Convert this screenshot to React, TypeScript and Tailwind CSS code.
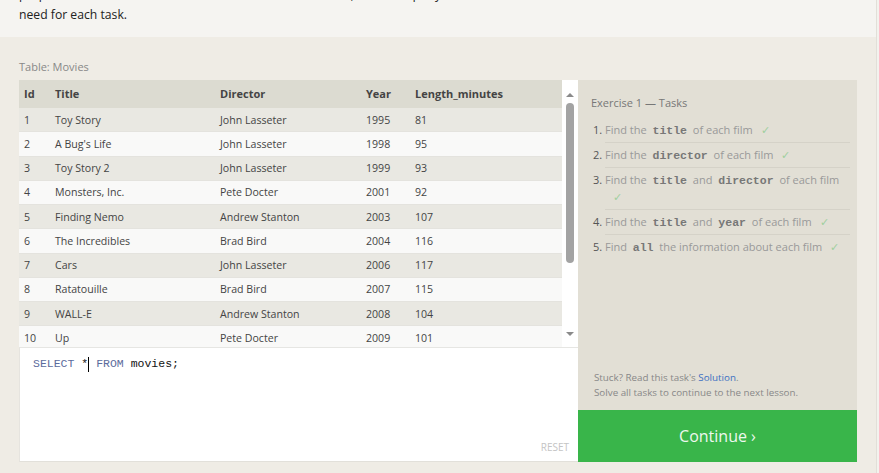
import React from "react";

const rows: [number, string, string, number, number][] = [
  [1, "Toy Story", "John Lasseter", 1995, 81],
  [2, "A Bug's Life", "John Lasseter", 1998, 95],
  [3, "Toy Story 2", "John Lasseter", 1999, 93],
  [4, "Monsters, Inc.", "Pete Docter", 2001, 92],
  [5, "Finding Nemo", "Andrew Stanton", 2003, 107],
  [6, "The Incredibles", "Brad Bird", 2004, 116],
  [7, "Cars", "John Lasseter", 2006, 117],
  [8, "Ratatouille", "Brad Bird", 2007, 115],
  [9, "WALL-E", "Andrew Stanton", 2008, 104],
  [10, "Up", "Pete Docter", 2009, 101],
];

const Code = ({ children }: { children: React.ReactNode }) => (
  <code className="font-['Liberation_Mono',monospace] text-[11.5px] leading-[10px] font-bold text-[#777] px-[3px]">
    {children}
  </code>
);

const Check = () => <span className="text-[#9fcf9f] ml-[8px] text-[11px] leading-[10px]">✓</span>;

const tasks: React.ReactNode[] = [
  <>Find the <Code>title</Code> of each film<Check /></>,
  <>Find the <Code>director</Code> of each film<Check /></>,
  <>Find the <Code>title</Code> and <Code>director</Code> of each film <Check /></>,
  <>Find the <Code>title</Code> and <Code>year</Code> of each film<Check /></>,
  <>Find <Code>all</Code> the information about each film<Check /></>,
];

export default function App() {
  return (
    <div className="w-[879px] h-[473px] overflow-hidden bg-[#f3f2ee] font-['Open_Sans',sans-serif]">
      <div className="w-[877px] border-r border-[#e2dfd8]">
        <div className="h-[37px] bg-[#f5f4f1] overflow-hidden">
          <p className="-mt-[15px] pl-[19px] pr-[230px] text-[12.2px] leading-[20px] text-[#222]">
            properties of each movie. to continue onto the next lesson, alter the query to find the exact information we need for each task.
          </p>
        </div>
        <div className="h-[436px] bg-[#efece5] pl-[19px]">
          <div className="h-[43px] flex items-end pb-[5px] text-[11px] text-[#888]">Table: Movies</div>
          <div className="flex">
            <div className="w-[559px] flex flex-col">
              <div className="h-[267px] flex bg-white">
                <div className="w-[543px] overflow-hidden text-[10.6px] text-[#444]">
                  <div className="grid grid-cols-[31px_165px_146px_49px_1fr] h-[28px] pt-[1px] items-center bg-[#dcdbd1] font-bold text-[11px] text-[#444]">
                    <div className="pl-[5px]">Id</div>
                    <div className="pl-[5px]">Title</div>
                    <div className="pl-[5px]">Director</div>
                    <div className="pl-[5px]">Year</div>
                    <div className="pl-[5px]">Length_minutes</div>
                  </div>
                  {rows.map((r, i) => (
                    <div
                      key={r[0]}
                      className={
                        "grid grid-cols-[31px_165px_146px_49px_1fr] h-[24.25px] pt-[2px] items-center border-b border-[#e4e3de] " +
                        (i % 2 === 0 ? "bg-[#e9e8e2]" : "bg-[#f9f9f8]")
                      }
                    >
                      <div className="pl-[5px]">{r[0]}</div>
                      <div className="pl-[5px]">{r[1]}</div>
                      <div className="pl-[5px]">{r[2]}</div>
                      <div className="pl-[5px]">{r[3]}</div>
                      <div className="pl-[5px]">{r[4]}</div>
                    </div>
                  ))}
                </div>
                <div className="w-[16px] flex flex-col items-center bg-white">
                  <div className="h-[23px] flex items-end pb-[6px]">
                    <div className="w-0 h-0 border-l-[4px] border-r-[4px] border-b-[4px] border-l-transparent border-r-transparent border-b-[#8a8a8a]" />
                  </div>
                  <div className="w-[8px] h-[160px] rounded-full bg-[#a3a3a3]" />
                  <div className="flex-1 flex items-end pb-[11px]">
                    <div className="w-0 h-0 border-l-[4px] border-r-[4px] border-t-[4px] border-l-transparent border-r-transparent border-t-[#8a8a8a]" />
                  </div>
                </div>
              </div>
              <div className="h-[115px] bg-white border-t border-[#e6e6e3] border-l border-b border-l-[#e6e4df] border-b-[#e2e0da] flex flex-col justify-between">
                <div className="pt-[8px] pl-[13px] font-['Liberation_Mono',monospace] text-[11.5px] leading-[16px] text-[#111] flex items-center">
                  <span className="text-[#5c6b9c]">SELECT</span>
                  <span>&nbsp;*</span>
                  <span className="inline-block w-[1px] h-[15px] bg-black" />
                  <span>&nbsp;</span>
                  <span className="text-[#5c6b9c]">FROM</span>
                  <span>&nbsp;movies;</span>
                </div>
                <div className="self-end pr-[9px] pb-[6px] text-[10px] text-[#c4c4c4]">RESET</div>
              </div>
            </div>
            <div className="w-[279px] flex flex-col">
              <div className="h-[330px] bg-[#e2dfd5] flex flex-col pl-[13px] pr-[7px]">
                <div className="pt-[15px] h-[37.5px] text-[11px] leading-[16px] text-[#777]">Exercise 1 — Tasks</div>
                <div className="text-[11px] text-[#999]">
                  {tasks.map((t, i) => (
                    <div key={i} className="flex">
                      <div className="w-[14px] pl-[2px] pt-[3.5px] leading-[17px] text-[#555]">{i + 1}.</div>
                      <div
                        className={
                          "flex-1 py-[3.5px] leading-[17px] " +
                          (i < tasks.length - 1 ? "border-b border-[#d5d2c8]" : "")
                        }
                      >
                        {t}
                      </div>
                    </div>
                  ))}
                </div>
                <div className="flex-1 flex flex-col justify-end pb-[10px] pl-[3px] text-[9.8px] leading-[15px] text-[#888]">
                  <div>
                    Stuck? Read this task's <span className="text-[#3c6fc2]">Solution</span>.
                  </div>
                  <div>Solve all tasks to continue to the next lesson.</div>
                </div>
              </div>
              <div className="h-[52px] bg-[#39b54a] flex items-center justify-center text-[16px] text-[#eef8ee]">
                Continue ›
              </div>
            </div>
          </div>
        </div>
      </div>
    </div>
  );
}
